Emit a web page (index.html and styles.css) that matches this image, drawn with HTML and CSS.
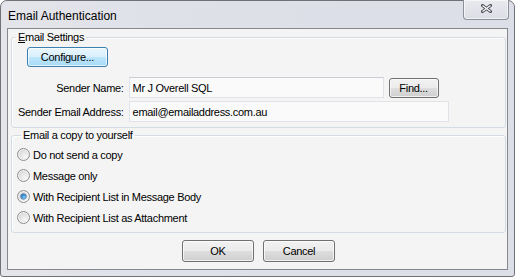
FILE: index.html
```html
<!DOCTYPE html>
<html>
<head>
<meta charset="utf-8">
<link rel="stylesheet" href="styles.css">
</head>
<body>
<div class="window">
  <div class="titlebar">
    <span class="title">Email Authentication</span>
    <div class="close">
      <svg width="11" height="9" viewBox="0 0 11 9">
        <path d="M1.5 1.5 L9.5 7.5 M9.5 1.5 L1.5 7.5" stroke="#4a4d55" stroke-width="3" stroke-linecap="square" fill="none"/>
        <path d="M1.5 1.5 L9.5 7.5 M9.5 1.5 L1.5 7.5" stroke="#ffffff" stroke-width="1.2" fill="none"/>
      </svg>
    </div>
  </div>
  <div class="client">
    <fieldset class="group group-settings">
      <legend><u>E</u>mail Settings</legend>
      <button class="btn btn-hot btn-configure">Configure...</button>
      <div class="form">
        <label class="lbl">Sender Name:</label>
        <div class="field-row">
          <div class="input input-name">Mr J Overell SQL</div>
          <button class="btn btn-find">Find...</button>
        </div>
        <label class="lbl">Sender Email Address:</label>
        <div class="field-row">
          <div class="input input-email">email@emailaddress.com.au</div>
        </div>
      </div>
    </fieldset>
    <fieldset class="group group-copy">
      <legend>Email a copy to yourself</legend>
      <div class="radio"><span class="dot"></span><span>Do not send a copy</span></div>
      <div class="radio"><span class="dot"></span><span>Message only</span></div>
      <div class="radio"><span class="dot checked"></span><span>With Recipient List in Message Body</span></div>
      <div class="radio"><span class="dot"></span><span>With Recipient List as Attachment</span></div>
    </fieldset>
    <div class="actions">
      <button class="btn btn-action">OK</button>
      <button class="btn btn-action">Cancel</button>
    </div>
  </div>
</div>
</body>
</html>
```

FILE: styles.css
```css
* { box-sizing: border-box; }
html, body { margin: 0; padding: 0; }
body {
  width: 515px;
  height: 277px;
  overflow: hidden;
  background: #ffffff;
  font-family: "Liberation Sans", Arial, sans-serif;
  font-size: 11px;
  letter-spacing: -0.3px;
  color: #000;
}
.window {
  width: 515px;
  height: 277px;
  border: 1px solid #707277;
  border-radius: 7px 7px 3px 3px;
  background: linear-gradient(90deg, #e4e5ea 0%, #dfe1e9 30%, #dcdee8 100%);
  display: flex;
  flex-direction: column;
  padding: 0 6px 6px 6px;
}
.titlebar {
  height: 27px;
  display: flex;
  justify-content: space-between;
  align-items: flex-start;
}
.title {
  font-size: 12px;
  letter-spacing: 0;
  margin-top: 8px;
  margin-left: 1px;
  color: #000;
}
.close {
  margin-top: -1px;
  margin-right: -1px;
  width: 46px;
  height: 20px;
  border: 1px solid #8d9098;
  border-top: none;
  border-radius: 0 0 4px 4px;
  background: linear-gradient(#e9eaee, #dcdee5);
  box-shadow: inset 0 0 0 1px rgba(255,255,255,0.6);
  display: flex;
  align-items: center;
  justify-content: center;
  padding-bottom: 2px;
}
.client {
  flex: 1;
  border: 1px solid #86888d;
  background: #f4f4f4;
  display: flex;
  flex-direction: column;
  padding: 0 1px 0 3px;
}
.group {
  margin: 0;
  border: 1px solid #d5dbe3;
  border-radius: 3px;
  box-shadow: inset 1px 1px 0 #ffffff;
  padding: 0;
}
.group legend {
  padding: 0 2px;
  margin-left: 4px;
  line-height: 13px;
}
.group-settings {
  margin-top: 2px;
  height: 97px;
}
.btn {
  font-family: "Liberation Sans", Arial, sans-serif;
  font-size: 11px;
  letter-spacing: -0.3px;
  color: #000;
  border: 1px solid #707070;
  border-radius: 3px;
  background: linear-gradient(#f2f2f2 0%, #ebebeb 48%, #dddddd 52%, #cfcfcf 100%);
  box-shadow: inset 0 0 0 1px rgba(255,255,255,0.7);
  padding: 0;
  display: flex;
  align-items: center;
  justify-content: center;
}
.btn-hot {
  border-color: #3c7fb1;
  background: linear-gradient(#eaf6fd 0%, #d9f0fc 48%, #bee6fd 52%, #a7d9f5 100%);
}
.btn-configure {
  width: 81px;
  height: 20px;
  margin: 3px 0 0 15px;
}
.form {
  display: grid;
  grid-template-columns: auto auto;
  justify-content: start;
  column-gap: 5px;
  row-gap: 3px;
  align-items: center;
  margin: 10px 0 0 6px;
}
.lbl { text-align: right; }
.field-row {
  display: flex;
  align-items: center;
  gap: 5px;
}
.input {
  height: 21px;
  border: 1px solid #e0e2e7;
  border-top-color: #c9ccd3;
  background: #fafafa;
  display: flex;
  align-items: center;
  padding-left: 3px;
}
.input-name { width: 255px; }
.input-email { width: 320px; border-color: #e2e3e8; }
.btn-find {
  width: 50px;
  height: 20px;
}
.group-copy {
  margin-top: 1px;
  height: 104px;
  padding: 2px 0 0 5px;
}
.radio {
  height: 21px;
  display: flex;
  align-items: center;
  gap: 3px;
}
.dot {
  width: 13px;
  height: 13px;
  flex: none;
  border-radius: 50%;
  border: 1px solid #8e8f8f;
  background: radial-gradient(circle at 65% 70%, #f6f6f6 0%, #e2e2e2 50%, #c8c8c8 100%);
  box-shadow: inset 0 0 0 1px #f4f4f4;
  position: relative;
}
.dot.checked::after {
  content: "";
  position: absolute;
  left: 3px;
  top: 3px;
  width: 5px;
  height: 5px;
  border-radius: 50%;
  background: radial-gradient(circle at 60% 65%, #8fd0f7 0%, #2a85d0 55%, #1a4f8f 100%);
  box-shadow: 0 0 0 0.5px #1d4f86;
}
.actions {
  display: flex;
  justify-content: center;
  gap: 9px;
  margin-top: 7px;
}
.btn-action {
  width: 72px;
  height: 22px;
}
```
